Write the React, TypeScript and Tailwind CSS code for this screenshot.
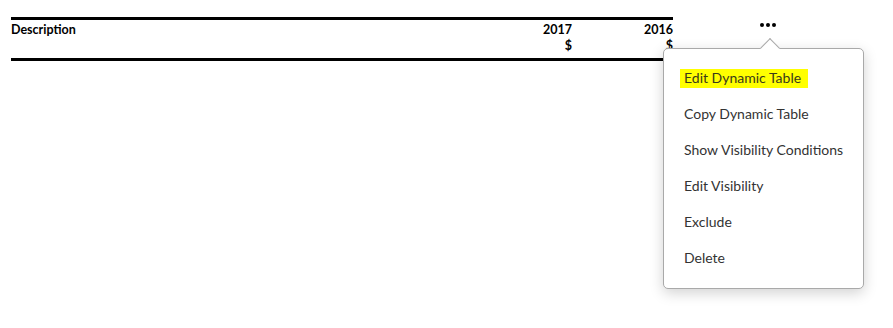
import React from "react";

const items = [
  "Edit Dynamic Table",
  "Copy Dynamic Table",
  "Show Visibility Conditions",
  "Edit Visibility",
  "Exclude",
  "Delete",
];

export default function App() {
  return (
    <div
      className="relative w-[893px] h-[328px] bg-white text-black"
      style={{ fontFamily: "Lato, 'Liberation Sans', sans-serif" }}
    >
      <div className="pt-[17px] pl-[11px]">
        <div className="w-[662px] border-t-[3px] border-b-[3px] border-black flex pt-[2px] pb-[4px] text-[12.5px] leading-[16px] font-bold">
          <div className="flex-1">Description</div>
          <div className="w-[101px] text-right flex flex-col">
            <span>2017</span>
            <span>$</span>
          </div>
          <div className="w-[101px] text-right flex flex-col">
            <span>2016</span>
            <span>$</span>
          </div>
        </div>
      </div>

      {/* dots trigger */}
      <div className="absolute left-[760px] top-[23px] flex gap-[2px]">
        <span className="w-[4px] h-[4px] rounded-full bg-black" />
        <span className="w-[4px] h-[4px] rounded-full bg-black" />
        <span className="w-[4px] h-[4px] rounded-full bg-black" />
      </div>

      {/* menu */}
      <div className="absolute left-[663px] top-[48px] w-[201px] h-[241px] bg-white border border-[#a9a9a9] rounded-[5px] shadow-[0_4px_14px_rgba(0,0,0,0.18)] z-10">
        <div className="absolute left-[99px] top-[-8px] w-[14px] h-[14px] bg-white border-t border-l border-[#a9a9a9] rotate-45" />
        <div className="relative flex flex-col pt-[20px] text-[14px] leading-[18px] text-[#333333]">
          {items.map((t, i) => (
            <div key={t} className="h-[36px] pl-[20px] flex items-start">
              {i === 0 ? (
                <span className="bg-[#ffff00] -ml-[4px] pl-[4px] pr-[7px] pb-[1px] text-[#3a3a1a]">
                  {t}
                </span>
              ) : (
                <span>{t}</span>
              )}
            </div>
          ))}
        </div>
      </div>
    </div>
  );
}
